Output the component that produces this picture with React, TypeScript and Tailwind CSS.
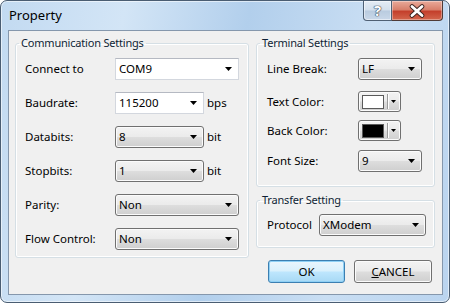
import React from 'react';

const font = "font-['Noto_Sans',sans-serif]";

function Arrow({ small }: { small?: boolean }) {
  return small ? (
    <svg width="5" height="3" viewBox="0 0 5 3" className="shrink-0">
      <path d="M0 0h5L2.5 3z" fill="#000" />
    </svg>
  ) : (
    <svg width="7" height="4" viewBox="0 0 7 4" className="shrink-0">
      <path d="M0 0h7L3.5 4z" fill="#000" />
    </svg>
  );
}

function Combo({ value, className, editable }: { value: string; className: string; editable?: boolean }) {
  const look = editable
    ? 'bg-white border border-[#d3d7de] border-t-[#b5b9c2]'
    : 'rounded-[3px] border border-[#707070] bg-[linear-gradient(#f3f3f3_0%,#ebebeb_48%,#dddddd_52%,#cfcfcf_100%)] shadow-[inset_0_0_0_1px_#fbfbfb]';
  return (
    <div className={`flex h-full items-center pl-[3px] pr-[6px] ${look} ${className}`}>
      <span className="flex-1 leading-none">{value}</span>
      <Arrow />
    </div>
  );
}

function ColorPick({ swatch }: { swatch: string }) {
  return (
    <div className="flex h-[21px] w-[43px] items-center rounded-[3px] border border-[#707070] bg-[linear-gradient(#f3f3f3_0%,#ebebeb_48%,#dddddd_52%,#cfcfcf_100%)] pl-[3px] shadow-[inset_0_0_0_1px_#fbfbfb]">
      <div className={`h-[14px] w-[22px] border border-[#5a5a5a] ${swatch}`} />
      <div className="ml-[3px] h-[15px] w-px bg-[#9a9a9a] shadow-[1px_0_0_#fff]" />
      <div className="ml-[3px]">
        <Arrow small />
      </div>
    </div>
  );
}

function Group({ title, className, children }: { title: string; className?: string; children: React.ReactNode }) {
  return (
    <fieldset className={`rounded-[3px] border border-[#d5dfe5] shadow-[inset_0_0_0_1px_#fff] ${className ?? ''}`}>
      <legend className="ml-[3px] px-[2px] text-[11px] leading-[16px] tracking-[-0.2px] text-[#0f1f35]">{title}</legend>
      {children}
    </fieldset>
  );
}

function Row({ label, w, h = 'h-[22px]', children }: { label: string; w: string; h?: string; children: React.ReactNode }) {
  return (
    <div className={`flex items-center ${h}`}>
      <span className={`${w} shrink-0`}>{label}</span>
      {children}
    </div>
  );
}

const commRows = [
  { label: 'Connect to', value: 'COM9', editable: true },
  { label: 'Baudrate:', value: '115200', editable: true, unit: 'bps' },
  { label: 'Databits:', value: '8', unit: 'bit' },
  { label: 'Stopbits:', value: '1', unit: 'bit' },
  { label: 'Parity:', value: 'Non' },
  { label: 'Flow Control:', value: 'Non' },
];

export default function App() {
  return (
    <div className={`h-[303px] w-[450px] bg-white text-[11.5px] text-black ${font}`}>
      <div className="flex h-full flex-col rounded-[7px] border border-[#4a5d72] bg-[linear-gradient(100deg,#c2daf1_0%,#d3e5f6_25%,#b2cfec_50%,#c9def3_75%,#bad4ef_100%)] shadow-[inset_0_0_0_1px_rgba(255,255,255,0.55)]">
        {/* Title bar */}
        <div className="flex h-[29px] shrink-0 items-start">
          <span className="mt-[5px] pl-[8px] text-[13px] leading-[18px] text-black">Property</span>
          <div className="ml-auto mr-[6px] flex h-[20px]">
            <div className="flex w-[29px] items-center justify-center rounded-bl-[4px] border border-t-0 border-[#4f6074] bg-[linear-gradient(#e4ecf5_0%,#d3dfec_48%,#b9cbdf_52%,#c9d8e9_100%)] shadow-[inset_0_0_0_1px_rgba(255,255,255,0.5)]">
              <span className="text-[15px] font-bold leading-none text-white [text-shadow:0_0_1px_#2d3b4d,0_0_1px_#2d3b4d,0_0_1px_#2d3b4d]">?</span>
            </div>
            <div className="flex w-[51px] items-center justify-center rounded-br-[4px] border border-l-0 border-t-0 border-[#4f3a36] bg-[linear-gradient(#e9aa9a_0%,#d8806c_45%,#c4402c_55%,#d3664d_100%)] shadow-[inset_0_0_0_1px_rgba(255,255,255,0.35)]">
              <svg width="18" height="14" viewBox="0 0 18 14">
                <path d="M4 2.5l10 9M14 2.5l-10 9" stroke="#3a2420" strokeWidth="4.6" strokeLinecap="round" />
                <path d="M4 2.5l10 9M14 2.5l-10 9" stroke="#fff" strokeWidth="2.8" strokeLinecap="round" />
              </svg>
            </div>
          </div>
        </div>

        {/* Client area */}
        <div className="mb-[7px] ml-[7px] mr-[6px] flex flex-1 gap-[7px] border border-[#8597ac] bg-[#f0f0f0] pl-[6px] pt-[4px]">
          <Group title="Communication Settings" className="w-[234px] self-start">
            <div className="flex flex-col gap-[12px] px-[9px] pb-[7px] pt-[7px]">
              {commRows.map((r) => (
                <Row key={r.label} label={r.label} w="w-[90px]">
                  {r.unit ? (
                    <>
                      <Combo value={r.value} editable={r.editable} className="w-[89px]" />
                      <span className="ml-[3px]">{r.unit}</span>
                    </>
                  ) : (
                    <Combo value={r.value} editable={r.editable} className="flex-1" />
                  )}
                </Row>
              ))}
            </div>
          </Group>

          <div className="flex w-[179px] flex-col">
            <Group title="Terminal Settings">
              <div className="flex flex-col pb-[14px] pl-[10px] pt-[7px]">
                <Row label="Line Break:" w="w-[91px]">
                  <Combo value="LF" className="w-[64px]" />
                </Row>
                <div className="mt-[11px]">
                  <Row label="Text Color:" w="w-[91px]" h="h-[21px]">
                    <ColorPick swatch="bg-white" />
                  </Row>
                </div>
                <div className="mt-[8px]">
                  <Row label="Back Color:" w="w-[91px]" h="h-[21px]">
                    <ColorPick swatch="bg-black" />
                  </Row>
                </div>
                <div className="mt-[9px]">
                  <Row label="Font Size:" w="w-[91px]">
                    <Combo value="9" className="w-[64px]" />
                  </Row>
                </div>
              </div>
            </Group>

            <Group title="Transfer Setting" className="mt-[5px]">
              <div className="pb-[11px] pl-[10px] pt-[6px]">
                <Row label="Protocol" w="w-[52px]">
                  <Combo value="XModem" className="w-[107px]" />
                </Row>
              </div>
            </Group>

            <div className="mt-[12px] flex gap-[9px] pl-[12px]">
              <button className="h-[23px] w-[77px] rounded-[3px] border border-[#3c7fb1] bg-[linear-gradient(#eaf6fd_0%,#d9f0fc_48%,#bee6fd_52%,#a7d9f5_100%)] shadow-[inset_0_0_0_1px_#8fd0f5] leading-none">
                OK
              </button>
              <button className="h-[23px] w-[78px] rounded-[3px] border border-[#707070] bg-[linear-gradient(#f3f3f3_0%,#ebebeb_48%,#dddddd_52%,#cfcfcf_100%)] shadow-[inset_0_0_0_1px_#fbfbfb] leading-none">
                <span className="underline">C</span>ANCEL
              </button>
            </div>
          </div>
        </div>
      </div>
    </div>
  );
}
